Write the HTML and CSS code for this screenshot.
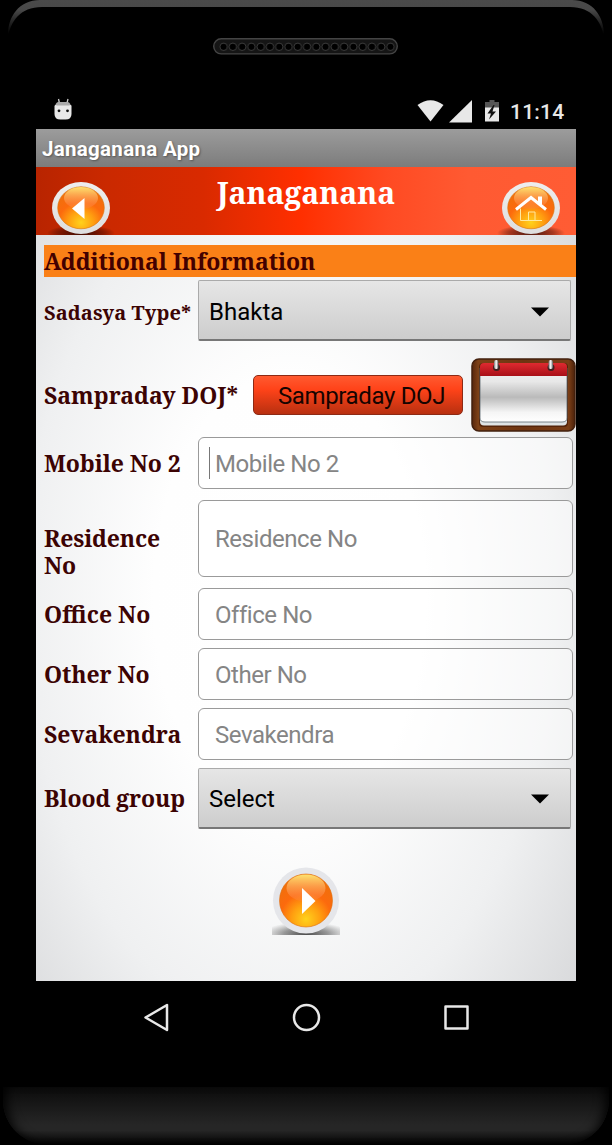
FILE: index.html
```html
<!DOCTYPE html>
<html lang="en">
  <head>
    <meta charset="utf-8">
    <title>Janaganana App</title>
    <link rel="stylesheet" href="styles.css">
  </head>
  <body>
    <div class="phone">
      <div class="phone-top">
        <svg class="bezel" width="612" height="60" viewBox="0 0 612 60">
          <defs>
            <linearGradient id="edge" x1="0" y1="0" x2="0" y2="40" gradientUnits="userSpaceOnUse">
              <stop offset="0" stop-color="#4a4a4a" />
              <stop offset="0.25" stop-color="#484848" />
              <stop offset="0.5" stop-color="#282828" />
              <stop offset="0.85" stop-color="#000" />
            </linearGradient>
            <pattern id="holes" x="219" y="38" width="9.27" height="18" patternUnits="userSpaceOnUse">
              <circle cx="4.6" cy="8.8" r="3.7" fill="#000" stroke="#3d3d3d" stroke-width="0.9" />
            </pattern>
          </defs>
          <path d="M8 38C7 18 18 0 40 0H572C594 0 605 18 604 38C602 22 592 7 570 7H42C20 7 10 22 8 38Z" fill="url(#edge)" />
          <rect x="213.7" y="38.7" width="183.6" height="15.2" rx="7.6" fill="#151515" stroke="#444" stroke-width="1.4" />
          <rect x="219" y="40" width="176" height="13" fill="url(#holes)" />
        </svg>
      </div>

      <div class="status-bar">
        <svg class="droid" width="20" height="24" viewBox="0 0 20 24">
          <path d="M5.5 2L6.4 6M15 2L14 6" stroke="#ccc" stroke-width="1.3" />
          <path d="M5 5H15Q18 6 18 11H2Q2 6 5 5Z" fill="#aaa" />
          <path d="M1.500 9Q2 7.500 4 8.500H16Q18.500 7.500 18.500 9V17Q18.500 22.500 12.500 22.500H7.500Q1.500 22.500 1.500 17Z" fill="#e8e8e8" />
          <circle cx="6" cy="13.800" r="1.4" fill="#111" />
          <circle cx="14.500" cy="13.800" r="1.4" fill="#111" />
        </svg>
        <svg class="signals" width="85" height="26" viewBox="0 0 85 26">
          <path d="M0.500 7Q13.500-2.500 26.500 7L13.500 23.500Z" fill="#e8e8e8" />
          <path d="M55 2V24.500H32Z" fill="#e8e8e8" />
          <path d="M68 4H72.500V2H77.500V4H82V10H68Z" fill="#555" />
          <path d="M68 9.500H82V23.500H68Z" fill="#e8e8e8" />
          <path d="M76.500 7L70.500 15.500H74L72 21.500L79 13.500H75.500L77.500 7Z" fill="#111" />
        </svg>
        <span class="clock">11:14</span>
      </div>

      <div class="screen">
        <div class="title-bar">Janaganana App</div>

        <div class="header">
          <svg class="orb" width="68" height="56" viewBox="0 0 68 56">
            <defs>
              <radialGradient id="orange" cx="0.5" cy="0.85" r="0.75">
                <stop offset="0" stop-color="#ffd21c" />
                <stop offset="0.35" stop-color="#ffa010" />
                <stop offset="0.65" stop-color="#fc6a0d" />
                <stop offset="1" stop-color="#f0700c" />
              </radialGradient>
              <linearGradient id="gloss" x1="0" y1="0" x2="0" y2="1">
                <stop offset="0" stop-color="#fff07a" stop-opacity="0.9" />
                <stop offset="0.4" stop-color="#ffb766" stop-opacity="0.7" />
                <stop offset="1" stop-color="#ff8050" stop-opacity="0.25" />
              </linearGradient>
              <linearGradient id="ring" x1="0" y1="0" x2="0" y2="1">
                <stop offset="0" stop-color="#eee" />
                <stop offset="1" stop-color="#dedede" />
              </linearGradient>
              <radialGradient id="shadow">
                <stop offset="0" stop-color="#000" stop-opacity="0.75" />
                <stop offset="0.65" stop-color="#200" stop-opacity="0.4" />
                <stop offset="1" stop-color="#000" stop-opacity="0" />
              </radialGradient>
              <radialGradient id="soft-shadow">
                <stop offset="0" stop-color="#000" stop-opacity="0.7" />
                <stop offset="0.5" stop-color="#222" stop-opacity="0.45" />
                <stop offset="1" stop-color="#444" stop-opacity="0" />
              </radialGradient>
            </defs>
            <ellipse cx="34" cy="54" rx="34" ry="8" fill="url(#shadow)" />
            <ellipse cx="34" cy="29" rx="29" ry="26" fill="url(#ring)" />
            <ellipse cx="34" cy="28.800" rx="23.300" ry="21" fill="url(#orange)" stroke="#d8740c" stroke-width="0.6" />
            <ellipse cx="34" cy="19" rx="17" ry="11" fill="url(#gloss)" />
            <path d="M25 29.500L37.500 19V40Z" fill="#fff" />
          </svg>
          <h1>Janaganana</h1>
          <svg class="orb" width="68" height="56" viewBox="0 0 68 56">
            <ellipse cx="34" cy="54" rx="34" ry="8" fill="url(#shadow)" />
            <ellipse cx="34" cy="29" rx="29" ry="26" fill="url(#ring)" />
            <ellipse cx="34" cy="28.800" rx="23.300" ry="21" fill="url(#orange)" stroke="#d8740c" stroke-width="0.6" />
            <ellipse cx="34" cy="19" rx="17" ry="11" fill="url(#gloss)" />
            <path d="M19 30.500L34 18.500L49 30.500" fill="none" stroke="#fff" stroke-width="3" />
            <path d="M41 17.500H45V27L41 24Z" fill="#fff" />
            <path d="M23.500 29.500V41.500H45M31.500 41V33H38V41" fill="none" stroke="#ffe9a0" stroke-width="1" />
          </svg>
        </div>

        <form class="form">
          <h2>Additional Information</h2>

          <div class="row row-type">
            <label class="label-type">Sadasya Type*</label>
            <div class="spinner">
              <span>Bhakta</span>
              <svg width="18" height="10" viewBox="0 0 18 10"><path d="M0 0.500H18L9 9.500Z" /></svg>
            </div>
          </div>

          <div class="row row-date">
            <label class="label-date">Sampraday DOJ*</label>
            <button type="button" class="date-btn">Sampraday DOJ</button>
            <svg class="calendar" width="105" height="74" viewBox="0 0 105 74">
              <defs>
                <linearGradient id="wood" x1="0" y1="0" x2="1" y2="0">
                  <stop offset="0" stop-color="#57260c" />
                  <stop offset="0.06" stop-color="#7d4117" />
                  <stop offset="0.5" stop-color="#6e3411" />
                  <stop offset="0.94" stop-color="#7a3e16" />
                  <stop offset="1" stop-color="#4a200a" />
                </linearGradient>
                <linearGradient id="page" x1="0" y1="0" x2="0" y2="1">
                  <stop offset="0" stop-color="#f1f1f1" />
                  <stop offset="0.25" stop-color="#e8e8e8" />
                  <stop offset="0.54" stop-color="#bababa" />
                  <stop offset="0.82" stop-color="#f5f5f5" />
                  <stop offset="1" stop-color="#fff" />
                </linearGradient>
                <linearGradient id="red" x1="0" y1="0" x2="0" y2="1">
                  <stop offset="0" stop-color="#df2a30" />
                  <stop offset="1" stop-color="#a80f17" />
                </linearGradient>
                <linearGradient id="metal" x1="0" y1="0" x2="1" y2="0">
                  <stop offset="0" stop-color="#777" />
                  <stop offset="0.5" stop-color="#fff" />
                  <stop offset="1" stop-color="#555" />
                </linearGradient>
              </defs>
              <rect x="1" y="1" width="103" height="72" rx="7" fill="url(#wood)" stroke="#42200e" stroke-width="1.5" />
              <rect x="8" y="5" width="89" height="64" rx="4" fill="#552409" />
              <rect x="9" y="8" width="87" height="59.500" rx="4" fill="#dfe4e6" />
              <path d="M9 10V60Q9 64 14 64H91Q96 64 96 60V10Z" fill="url(#page)" stroke="#5c6870" stroke-width="0.8" />
              <path d="M9 18V9Q9 5 13 5H92Q96 5 96 9V18Z" fill="url(#red)" />
              <circle cx="25.500" cy="9.500" r="3.5" fill="#402020" />
              <circle cx="80" cy="9.500" r="3.5" fill="#402020" />
              <rect x="23" y="2" width="4.500" height="9" rx="2" fill="url(#metal)" />
              <rect x="77.500" y="2" width="4.500" height="9" rx="2" fill="url(#metal)" />
            </svg>
          </div>

          <div class="row row-mobile">
            <label>Mobile No 2</label>
            <div class="field focused"><input type="text" placeholder="Mobile No 2"></div>
          </div>
          <div class="row row-residence">
            <label class="label-residence">Residence No</label>
            <div class="field"><input type="text" placeholder="Residence No"></div>
          </div>
          <div class="row">
            <label class="label-office">Office No</label>
            <div class="field"><input type="text" placeholder="Office No"></div>
          </div>
          <div class="row">
            <label>Other No</label>
            <div class="field"><input type="text" placeholder="Other No"></div>
          </div>
          <div class="row">
            <label class="label-kendra">Sevakendra</label>
            <div class="field"><input type="text" placeholder="Sevakendra"></div>
          </div>

          <div class="row row-blood">
            <label>Blood group</label>
            <div class="spinner">
              <span>Select</span>
              <svg width="18" height="10" viewBox="0 0 18 10"><path d="M0 0.500H18L9 9.500Z" /></svg>
            </div>
          </div>
        </form>

        <svg class="next" width="68" height="68" viewBox="0 0 68 68">
          <ellipse cx="34" cy="67" rx="44" ry="12" fill="url(#soft-shadow)" />
          <circle cx="34" cy="33.500" r="33" fill="#e5e6ea" />
          <circle cx="34" cy="33.500" r="26.500" fill="url(#orange)" stroke="#df6d0c" stroke-width="0.6" />
          <ellipse cx="34" cy="21" rx="19.500" ry="13.500" fill="url(#gloss)" />
          <path d="M30 21V47L43.500 34Z" fill="#fff" />
        </svg>
      </div>

      <div class="nav-bar">
        <svg width="28" height="30" viewBox="0 0 28 30"><path d="M2.500 14.500L24 2V27Z" /></svg>
        <svg width="30" height="30" viewBox="0 0 30 30"><circle cx="14.500" cy="14.500" r="12.500" /></svg>
        <svg width="28" height="30" viewBox="0 0 28 30"><path d="M2.500 3.500H24.500V25.500H2.500Z" /></svg>
      </div>
      <div class="phone-chin"></div>
    </div>
  </body>
</html>
```
FILE: styles.css
```css
body {
  margin: 0;
  background: #000;
  font-family: Roboto, "Liberation Sans", sans-serif;
}

.phone {
  width: 612px;
  height: 1145px;
  background: #000;
  display: flex;
  flex-direction: column;
  overflow: hidden;
}

.phone svg {
  display: block;
  flex-shrink: 0;
}

.phone-top {
  height: 93px;
}

.status-bar {
  height: 36px;
  padding: 0 47px 0 53px;
  display: flex;
  align-items: center;
  color: #e8e8e8;
}

.droid {
  margin-top: -5px;
}

.signals {
  margin-left: auto;
}

.clock {
  width: 55px;
  margin-left: 8px;
  padding-top: 2px;
  font-size: 21px;
  font-weight: 500;
  letter-spacing: 0.2px;
  line-height: 34px;
}

.screen {
  width: 540px;
  height: 852px;
  margin-left: 36px;
  background: radial-gradient(ellipse 390px 640px at 47% 55%, #fff 0%, #fefefe 35%, #eff0f1 68%, #d5d6d8 100%);
}

.title-bar {
  height: 38px;
  padding-left: 6px;
  line-height: 40px;
  font-size: 20.5px;
  font-weight: bold;
  letter-spacing: 0.3px;
  color: #fff;
  background: linear-gradient(#9c9c9c, #7c7c7c);
  text-shadow: 1px 1px 2px #555;
}

.header {
  height: 68px;
  padding: 0 11px;
  display: flex;
  justify-content: space-between;
  background: linear-gradient(90deg, #b82400 0%, #ca2900 13%, #d92a00 31%, #ff2f00 49%, #ff4a22 65%, #ff5a32 80%, #ff5c34 100%);
}

.orb {
  margin-top: 12px;
}

h1,
h2,
label {
  margin: 0;
  font-family: "Noto Serif", "Droid Serif", "DejaVu Serif Condensed", "DejaVu Serif", serif;
  font-weight: bold;
}

h1 {
  font-size: 30px;
  line-height: 52px;
  color: #fff;
  white-space: nowrap;
}

.form {
  padding: 10px 0 0 8px;
}

h2 {
  height: 32px;
  line-height: 33px;
  font-size: 23px;
  letter-spacing: -0.08px;
  color: #420000;
  background: #fa8017;
  white-space: nowrap;
}

.row {
  height: 52px;
  margin-bottom: 8px;
  display: flex;
  align-items: center;
}

label {
  width: 154px;
  flex-shrink: 0;
  font-size: 23px;
  letter-spacing: -0.08px;
  line-height: 27px;
  color: #3c0303;
  white-space: nowrap;
}

.row-type {
  height: 61px;
  margin: 3px 0 17px;
}

.label-type {
  padding-top: 3px;
  font-size: 20px;
  letter-spacing: 0.08px;
}

.spinner {
  box-sizing: border-box;
  width: 373px;
  height: 61px;
  padding: 3px 21px 0 10px;
  display: flex;
  align-items: center;
  justify-content: space-between;
  font-size: 24px;
  color: #000;
  background: linear-gradient(#e6e6e6, #cdcdcd);
  border: 1px solid #aaa;
  border-bottom: 2px solid #777;
  border-radius: 2px;
}

.row-date {
  height: 74px;
  margin-bottom: 5px;
}

.label-date {
  width: 209px;
  letter-spacing: 0;
}

.date-btn {
  box-sizing: border-box;
  width: 210px;
  height: 40px;
  padding: 1px 0 0 7px;
  margin-right: 8px;
  font-family: inherit;
  font-size: 24px;
  letter-spacing: -0.35px;
  line-height: 39px;
  color: #160400;
  white-space: nowrap;
  background: linear-gradient(#ff5a30, #ff4319 35%, #b83010);
  border: 1px solid #8d2a15;
  border-radius: 5px;
}

.field {
  box-sizing: border-box;
  position: relative;
  width: 375px;
  height: 100%;
  background: rgba(255, 255, 255, 0.5);
  border: 1.5px solid #9a9a9a;
  border-radius: 6px;
}

.field input {
  box-sizing: border-box;
  width: 100%;
  height: 100%;
  padding: 2px 16px 0;
  border: 0;
  outline: 0;
  background: none;
  font-family: inherit;
  font-size: 24px;
  letter-spacing: -0.45px;
}

.field input::placeholder {
  color: #858585;
}

/* text cursor */
.focused::before {
  content: "";
  position: absolute;
  left: 10px;
  top: 9px;
  width: 1px;
  height: 32px;
  background: #777;
}

.row-mobile {
  margin-bottom: 11px;
}

.row-residence {
  height: 77px;
  margin-bottom: 11px;
}

.row-residence input {
  padding-top: 0;
}

.label-residence {
  width: 125px;
  margin-right: 29px;
  padding-top: 27px;
  letter-spacing: -0.15px;
  white-space: normal;
}

.label-office,
.label-kendra {
  letter-spacing: 0;
}

.row-blood {
  height: 62px;
  margin: -1px 0 0;
}

.row-blood .spinner {
  padding-top: 2px;
}

.next {
  margin: 38px 0 0 236px;
}

.nav-bar {
  height: 74px;
  padding: 0 141px 0 143px;
  display: flex;
  align-items: center;
  justify-content: space-between;
}

.nav-bar svg {
  fill: none;
  stroke: #e8e8e8;
  stroke-width: 2.5;
  stroke-linejoin: round;
}

.phone-chin {
  height: 58px;
  margin: 32px 3px 0;
  background: linear-gradient(#0b0b0b, #262626 65%, #262626 75%, #000);
  border-radius: 0 0 45px 45px;
  box-shadow: inset 10px 0 12px -7px #000, inset -10px 0 12px -7px #000;
}
```
